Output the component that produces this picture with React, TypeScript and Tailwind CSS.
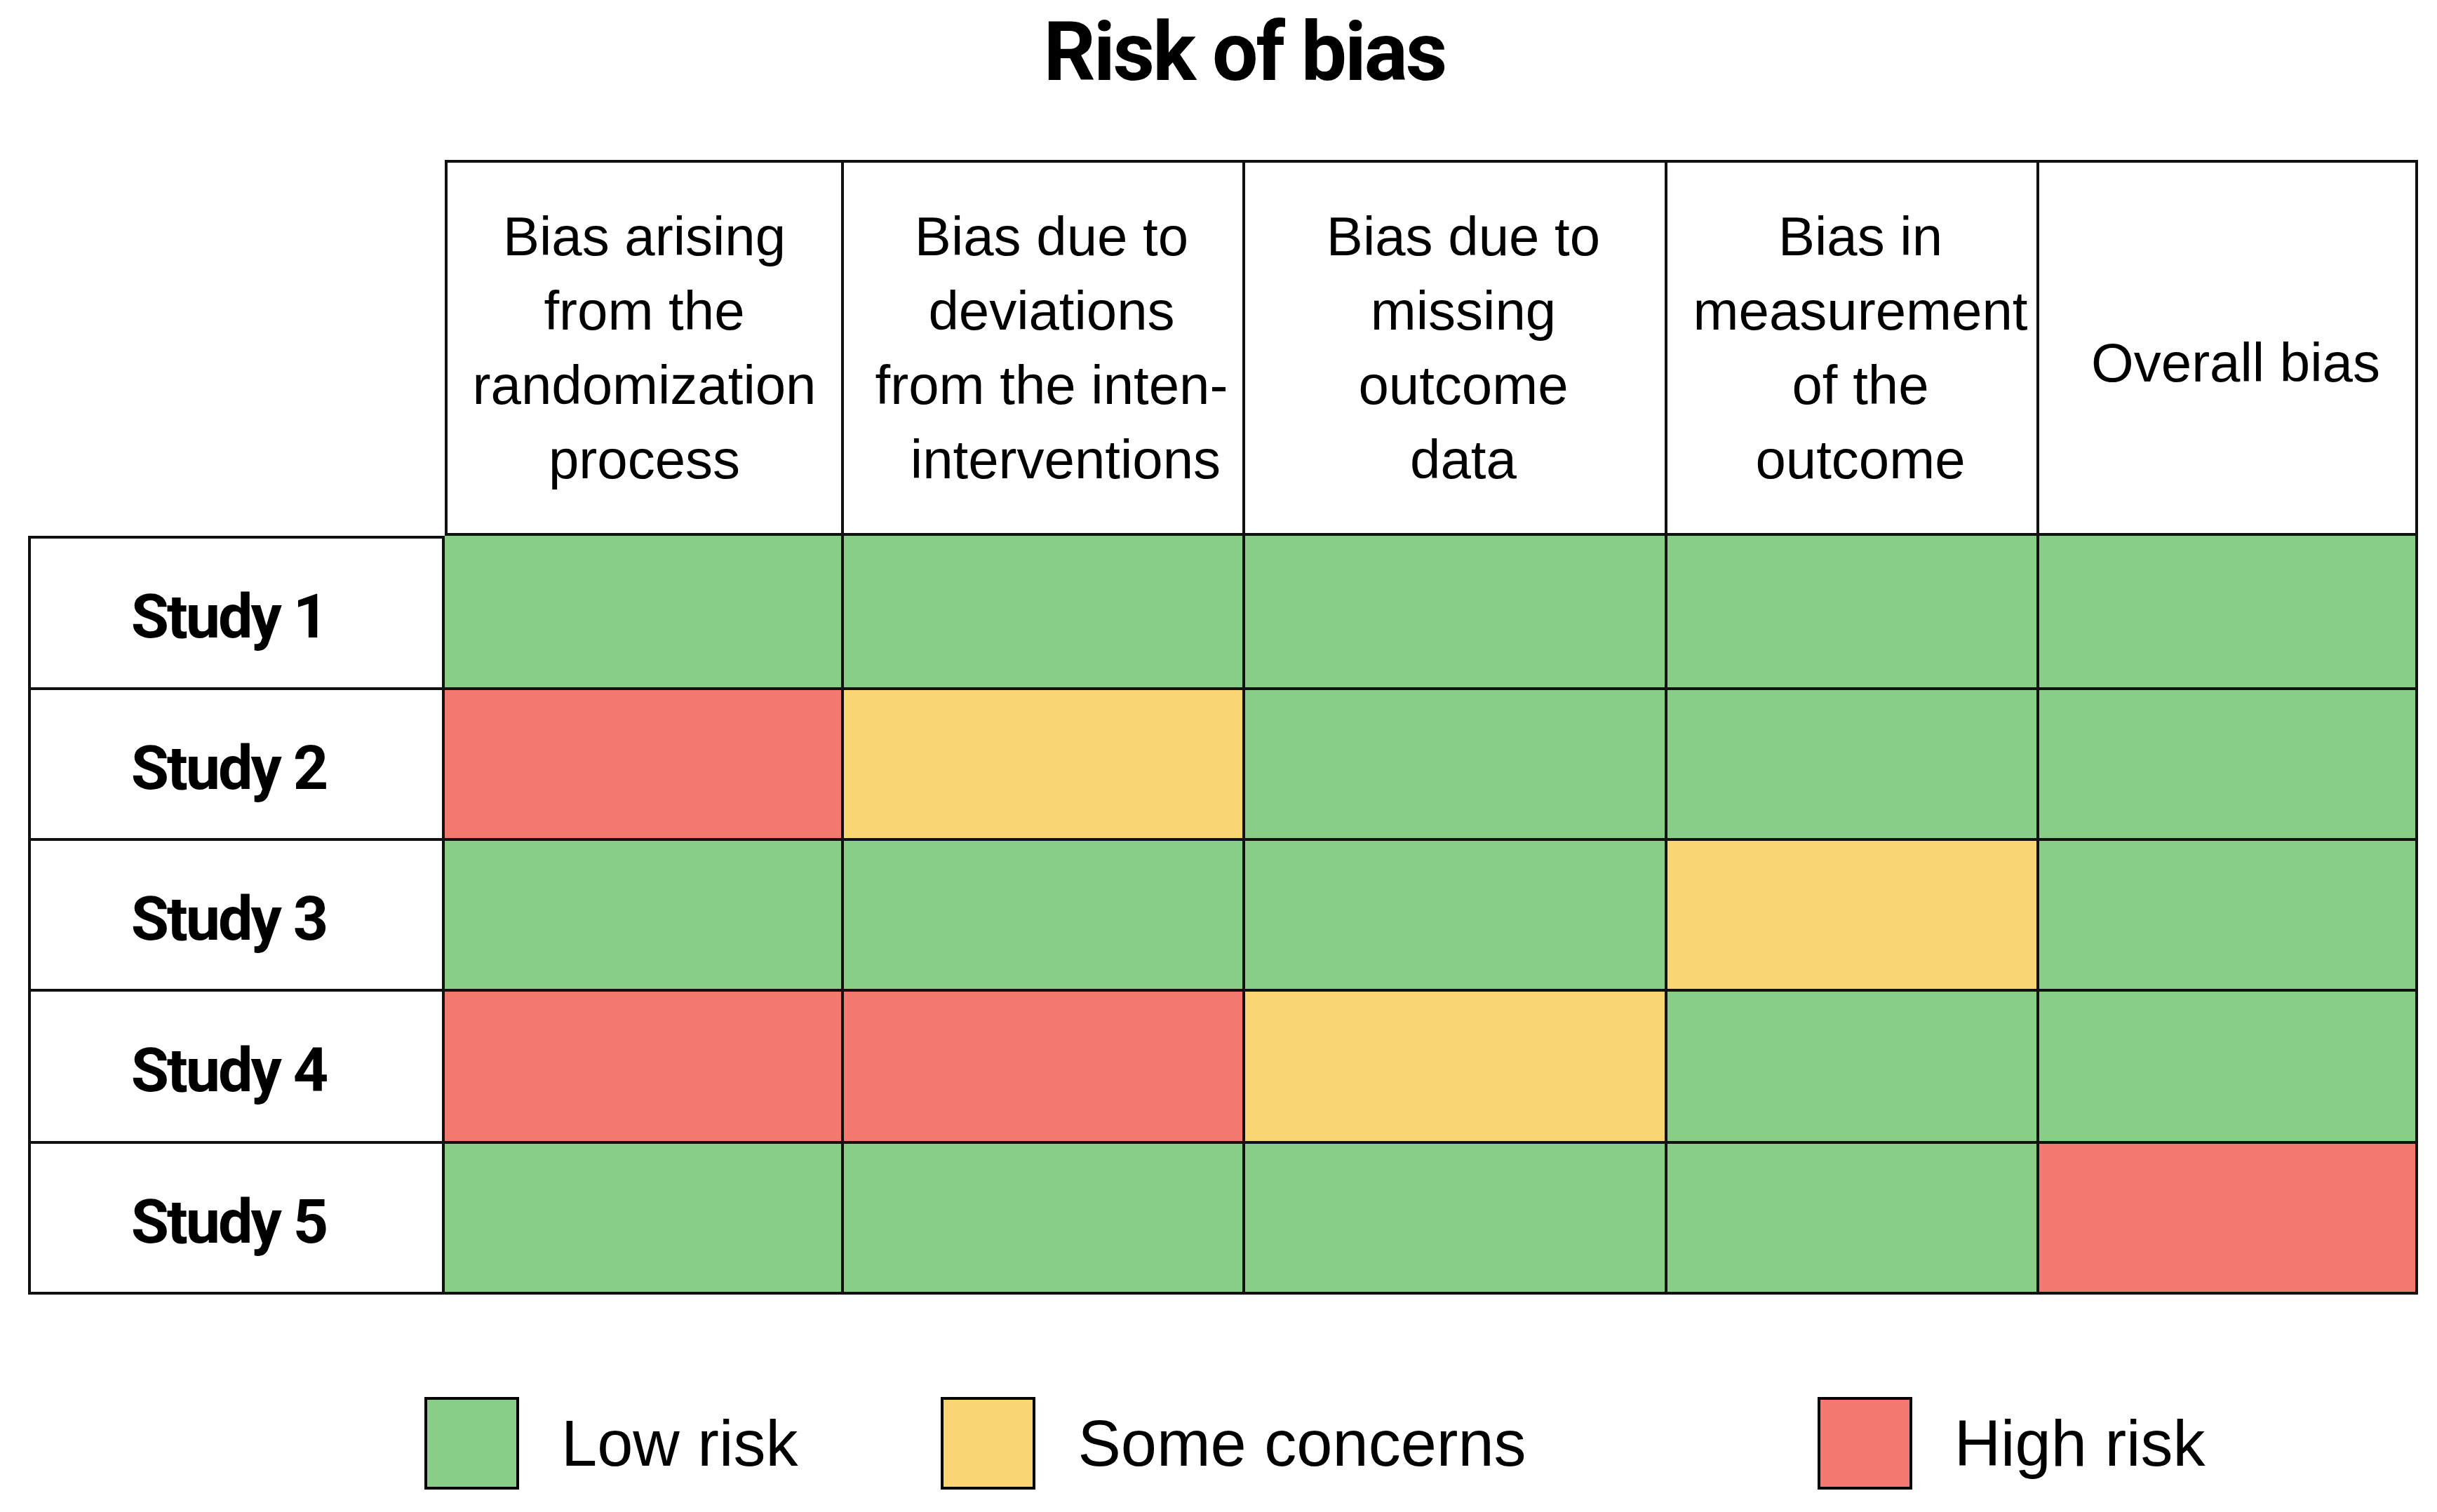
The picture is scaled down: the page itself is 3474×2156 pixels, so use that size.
type Risk = 'low' | 'some' | 'high';

const COLS = [
  ['Bias arising', 'from the', 'randomization', 'process'],
  ['Bias due to', 'deviations', 'from the inten-', 'interventions'],
  ['Bias due to', 'missing', 'outcome', 'data'],
  ['Bias in', 'measurement', 'of the', 'outcome'],
  ['Overall bias'],
];

const ROWS: { name: string; cells: Risk[] }[] = [
  { name: 'Study 1', cells: ['low', 'low', 'low', 'low', 'low'] },
  { name: 'Study 2', cells: ['high', 'some', 'low', 'low', 'low'] },
  { name: 'Study 3', cells: ['low', 'low', 'low', 'some', 'low'] },
  { name: 'Study 4', cells: ['high', 'high', 'some', 'low', 'low'] },
  { name: 'Study 5', cells: ['low', 'low', 'low', 'low', 'high'] },
];

const FILL: Record<Risk, string> = {
  low: 'bg-[#89ce87]',
  some: 'bg-[#f9d673]',
  high: 'bg-[#f27870]',
};

function LegendItem({ risk, label, className }: { risk: Risk; label: string; className?: string }) {
  return (
    <div className={`flex items-center gap-[60px] ${className ?? ''}`}>
      <div className={`w-[135px] h-[132px] border-[4px] border-black ${FILL[risk]}`} />
      <span className="text-[92px] leading-none">{label}</span>
    </div>
  );
}

export default function App() {
  return (
    <div className="w-[3474px] h-[2156px] bg-white text-black font-['Liberation_Sans',Arial,sans-serif] overflow-hidden">
      <div className="pt-[16px] pl-[74px] flex justify-center">
        <h1 className="font-['Roboto',sans-serif] font-bold text-[116px] leading-none tracking-[-3px]">
          Risk of bias
        </h1>
      </div>

      <div className="mt-[96px] ml-[40px] grid grid-cols-[594px_569px_572px_602px_530px_540px] grid-rows-[536px_220px_215px_215px_217px_215px]">
        <div />
        {COLS.map((lines, i) => (
          <div
            key={i}
            className={`flex flex-col items-center justify-center border-t-[4px] border-r-[4px] border-b-[4px] border-[#111] text-[78px] leading-[106px] text-center ${
              i === 0 ? 'border-l-[4px]' : 'pl-[24px]'
            } ${i === 4 ? 'pt-[42px]' : ''}`}
          >
            {lines.map((l, j) => (
              <div key={j} className={i === 1 && j === 3 ? 'pl-[40px]' : ''}>
                {l}
              </div>
            ))}
          </div>
        ))}

        {ROWS.map((row, r) => (
          <div key={row.name} className="contents">
            <div
              className={`flex items-center justify-center pr-[22px] pt-[10px] border-l-[4px] border-r-[4px] border-b-[4px] border-[#111] ${
                r === 0 ? 'border-t-[4px]' : ''
              }`}
            >
              <span className="font-['Roboto',sans-serif] font-bold text-[88px] leading-none tracking-[-3px]">
                {row.name}
              </span>
            </div>
            {row.cells.map((c, k) => (
              <div key={k} className={`border-r-[4px] border-b-[4px] border-[#111] ${FILL[c]}`} />
            ))}
          </div>
        ))}
      </div>

      <div className="mt-[146px] ml-[605px] flex items-center">
        <LegendItem risk="low" label="Low risk" />
        <LegendItem risk="some" label="Some concerns" className="ml-[204px]" />
        <LegendItem risk="high" label="High risk" className="ml-[415px]" />
      </div>
    </div>
  );
}
